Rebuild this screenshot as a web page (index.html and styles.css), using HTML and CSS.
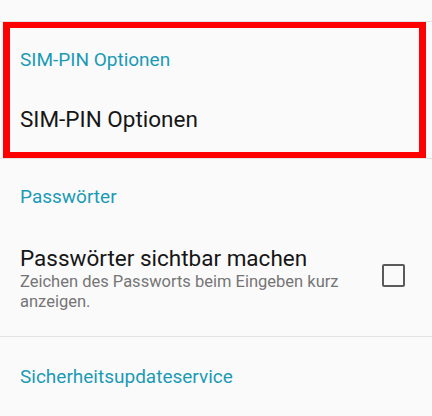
FILE: index.html
```html
<!DOCTYPE html>
<html lang="de">
<head>
<meta charset="utf-8">
<link rel="stylesheet" href="styles.css">
</head>
<body>
<div class="prev"></div>
<section class="group highlighted">
  <div class="category">SIM-PIN Optionen</div>
  <div class="item item-simple">
    <div class="title">SIM-PIN Optionen</div>
  </div>
</section>
<section class="group second">
  <div class="category">Passwörter</div>
  <div class="item item-check">
    <div class="texts">
      <div class="title">Passwörter sichtbar machen</div>
      <div class="summary">Zeichen des Passworts beim Eingeben kurz anzeigen.</div>
    </div>
    <div class="checkbox"></div>
  </div>
</section>
<section class="group last">
  <div class="category">Sicherheitsupdateservice</div>
</section>
</body>
</html>
```

FILE: styles.css
```css
html, body {
  margin: 0;
  padding: 0;
  background: #fafafa;
  font-family: Roboto, "Noto Sans", sans-serif;
  width: 432px;
  height: 416px;
  overflow: hidden;
}

.prev {
  height: 21px;
  border-bottom: 1px solid #e3e3e3;
}

.group {
  border-bottom: 1px solid #e3e3e3;
  padding-top: 26px;
}

.highlighted {
  position: relative;
  height: 110px;
}

.highlighted::after {
  content: "";
  position: absolute;
  left: 3px;
  right: 6px;
  top: 0;
  bottom: 0;
  border: 7px solid #ff0000;
  border-top-width: 6px;
  border-bottom-width: 6px;
}

.second {
  padding-top: 26px;
}

.category {
  font-size: 19px;
  line-height: 24px;
  color: #1b9ab5;
  padding-left: 20px;
}

.item-simple {
  padding-top: 33px;
  padding-left: 20px;
}

.title {
  font-size: 22.5px;
  line-height: 28px;
  color: #161616;
}

.item-check {
  display: flex;
  align-items: center;
  padding: 35px 27px 24px 20px;
}

.texts {
  flex: 1;
  padding-right: 20px;
}

.summary {
  font-size: 16.5px;
  line-height: 20px;
  color: #757575;
}

.checkbox {
  width: 19px;
  height: 19px;
  border: 2px solid #5a5a5a;
  border-radius: 2px;
  margin-top: -6px;
}

.last {
  border-bottom: none;
  padding-top: 28px;
}
```
